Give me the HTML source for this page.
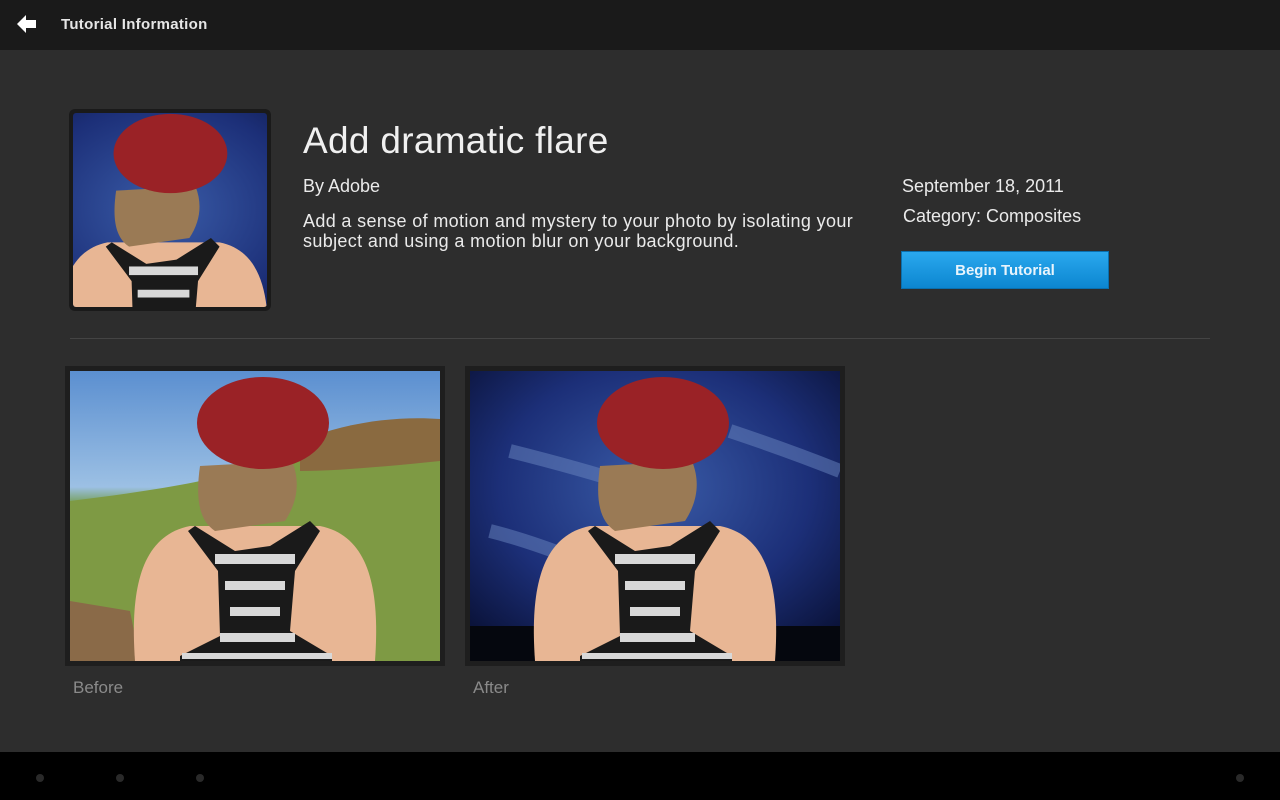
<!DOCTYPE html>
<html><head><meta charset="utf-8"><style>
*{margin:0;padding:0;box-sizing:border-box}
body{width:1280px;height:800px;background:#2d2d2d;font-family:"Liberation Sans","DejaVu Sans",sans-serif;position:relative;overflow:hidden;color:#eee}
.top{position:absolute;left:0;top:0;width:1280px;height:50px;background:#1a1a1a}
.top .t{position:absolute;left:61px;top:16px;font-size:15px;font-weight:bold;color:#e6e6e6;letter-spacing:.3px}
.bot{position:absolute;left:0;top:752px;width:1280px;height:48px;background:#000}
.dot{position:absolute;top:774px;width:8px;height:8px;border-radius:50%;background:#2a2a2a}
.abs{position:absolute}
h1{position:absolute;left:303px;top:120px;font-size:37px;font-weight:normal;color:#f0f0f0;letter-spacing:.3px}
.txt{font-size:18px;color:#eaeaea}
.btn{position:absolute;left:901px;top:251px;width:208px;height:38px;background:linear-gradient(#2aa8ee,#0c86d0);border:1px solid #0a6fae;color:#e8f4fc;font-weight:bold;font-size:15px;text-align:center;line-height:38px}
.hr{position:absolute;left:70px;top:338px;width:1140px;height:1px;background:#444}
.frame{position:absolute;background:#1e1e1e;padding:5px}
.lab{position:absolute;font-size:17px;color:#8a8a8a}
</style></head><body>
<svg width="0" height="0" style="position:absolute">
<defs>
<linearGradient id="sky" x1="0" y1="0" x2="0" y2="1"><stop offset="0" stop-color="#5b8fd0"/><stop offset=".4" stop-color="#9cc0e4"/><stop offset=".45" stop-color="#7aa36a"/><stop offset="1" stop-color="#6f9a3c"/></linearGradient>
<radialGradient id="blue" cx=".5" cy=".4" r=".7"><stop offset="0" stop-color="#3a5ca8"/><stop offset=".6" stop-color="#1c2f78"/><stop offset="1" stop-color="#0a1238"/></radialGradient>
<g id="fig">
<path d="M65 290 C60 220 70 165 120 155 L250 155 C300 165 310 220 305 290 Z" fill="#e8b694"/>
<path d="M130 95 C125 130 130 150 145 160 L215 150 C228 130 230 110 222 90 Z" fill="#9a7a55"/>
<ellipse cx="193" cy="52" rx="66" ry="46" fill="#9a2226"/>
<path d="M125 155 L165 180 L200 175 L240 150 L250 160 L225 200 L220 260 L262 285 L262 290 L110 290 L110 285 L150 265 L148 200 L118 160 Z" fill="#1a1a1a"/>
<g fill="#d8d8d8"><rect x="145" y="183" width="80" height="10"/><rect x="155" y="210" width="60" height="9"/><rect x="160" y="236" width="50" height="9"/><rect x="150" y="262" width="75" height="9"/><rect x="112" y="282" width="150" height="6"/></g>
</g>
</defs></svg>
<div class="top"><svg class="abs" style="left:17px;top:15px" width="20" height="18" viewBox="0 0 20 18"><path d="M0 9 L9 0 L9 5 L19 5 L19 13 L9 13 L9 18 Z" fill="#fff"/></svg><div class="t">Tutorial Information</div></div>

<div class="frame" style="left:69px;top:109px;padding:4px;border-radius:6px;background:#1a1a1a"><svg width="194" height="194" viewBox="80 5 225 225" preserveAspectRatio="xMidYMid slice" style="display:block;border-radius:3px"><rect x="0" y="0" width="370" height="290" fill="url(#blue)"/><use href="#fig"/></svg></div>

<h1>Add dramatic flare</h1>
<div class="abs txt" style="left:303px;top:176px">By Adobe</div>
<div class="abs txt" style="left:303px;top:211px;width:580px;line-height:20px;letter-spacing:.35px">Add a sense of motion and mystery to your photo by isolating your subject and using a motion blur on your background.</div>
<div class="abs txt" style="left:902px;top:176px">September 18, 2011</div>
<div class="abs txt" style="left:903px;top:206px">Category: Composites</div>
<div class="btn">Begin Tutorial</div>
<div class="hr"></div>

<div class="frame" style="left:65px;top:366px"><svg width="370" height="290" style="display:block"><rect width="370" height="290" fill="url(#sky)"/><path d="M200 90 C260 60 320 50 370 50 L370 290 L0 290 L0 130 C80 120 150 110 200 90Z" fill="#7e9a44"/><path d="M230 70 C280 50 330 45 370 48 L370 90 C320 95 270 100 230 100Z" fill="#8a6a40"/><path d="M0 230 L60 240 L70 290 L0 290Z" fill="#8a6a48"/><use href="#fig"/></svg></div>
<div class="frame" style="left:465px;top:366px"><svg width="370" height="290" style="display:block"><rect width="370" height="290" fill="url(#blue)"/><path d="M40 80 Q120 100 180 120 M260 60 Q320 80 370 100 M20 160 Q60 170 110 190" stroke="#6a86c0" stroke-width="14" opacity=".5" fill="none"/><rect y="255" width="370" height="35" fill="#05070e"/><use href="#fig"/></svg></div>
<div class="lab" style="left:73px;top:678px">Before</div>
<div class="lab" style="left:473px;top:678px">After</div>

<div class="bot"></div>
<div class="dot" style="left:36px"></div><div class="dot" style="left:116px"></div><div class="dot" style="left:196px"></div><div class="dot" style="left:1236px"></div>
</body></html>
